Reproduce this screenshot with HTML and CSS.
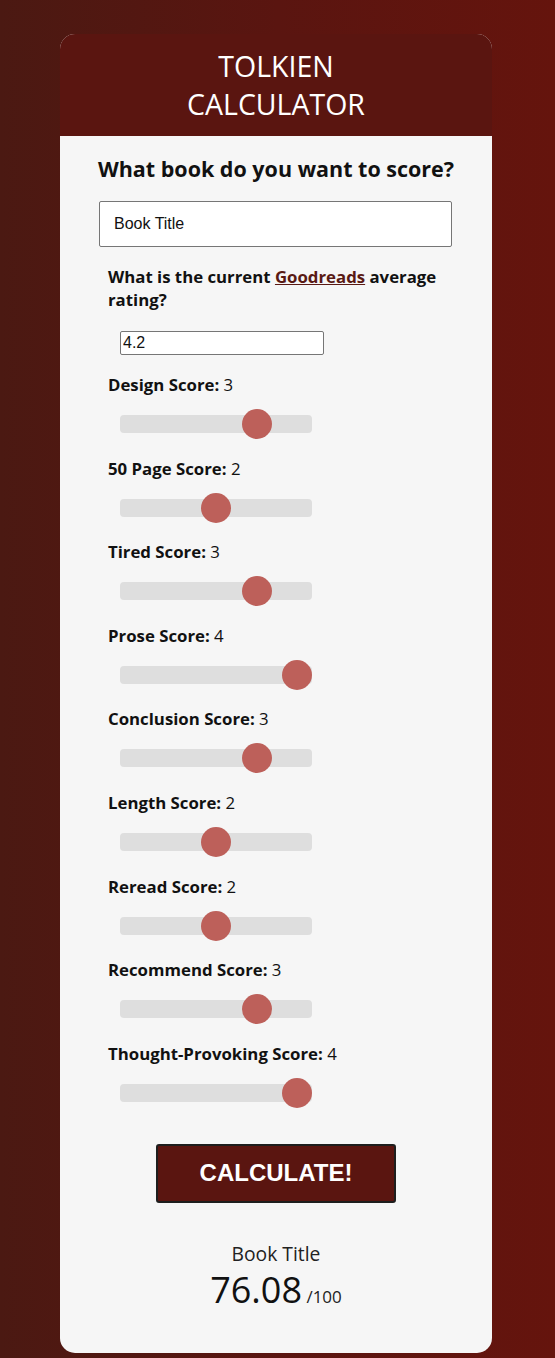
FILE: index.html
```html
<!DOCTYPE html>
<html lang="en">
<head>
<meta charset="utf-8">
<title>Tolkien Calculator</title>
<link rel="stylesheet" href="styles.css">
</head>
<body>
<main class="card">
  <header class="card-header">
    <h1 class="title">TOLKIEN<br>CALCULATOR</h1>
  </header>
  <section class="card-body">
    <h2 class="question">What book do you want to score?</h2>
    <input class="title-input" type="text" value="Book Title">
    <p class="rating-label">What is the current <a href="#" class="link">Goodreads</a> average rating?</p>
    <input class="rating-input" type="text" value="4.2">

    <div class="score"><p class="score-label"><b>Design Score:</b> 3</p><input class="slider" type="range" min="0" max="4" value="3"></div>
    <div class="score"><p class="score-label"><b>50 Page Score:</b> 2</p><input class="slider" type="range" min="0" max="4" value="2"></div>
    <div class="score"><p class="score-label"><b>Tired Score:</b> 3</p><input class="slider" type="range" min="0" max="4" value="3"></div>
    <div class="score"><p class="score-label"><b>Prose Score:</b> 4</p><input class="slider" type="range" min="0" max="4" value="4"></div>
    <div class="score"><p class="score-label"><b>Conclusion Score:</b> 3</p><input class="slider" type="range" min="0" max="4" value="3"></div>
    <div class="score"><p class="score-label"><b>Length Score:</b> 2</p><input class="slider" type="range" min="0" max="4" value="2"></div>
    <div class="score"><p class="score-label"><b>Reread Score:</b> 2</p><input class="slider" type="range" min="0" max="4" value="2"></div>
    <div class="score"><p class="score-label"><b>Recommend Score:</b> 3</p><input class="slider" type="range" min="0" max="4" value="3"></div>
    <div class="score"><p class="score-label"><b>Thought-Provoking Score:</b> 4</p><input class="slider" type="range" min="0" max="4" value="4"></div>

    <div class="actions"><button class="calc-btn" type="button">CALCULATE!</button></div>

    <div class="result">
      <p class="result-title">Book Title</p>
      <p class="result-score">76.08<span class="result-max"> /100</span></p>
    </div>
  </section>
</main>
</body>
</html>
```
FILE: styles.css
```css
* { box-sizing: border-box; }
html, body { margin: 0; padding: 0; }
body {
  background: linear-gradient(to right, #4b1912 0%, #5a1510 50%, #65140d 100%);
  font-family: "Open Sans", "Liberation Sans", sans-serif;
  color: #111;
  padding: 34px 0 6px;
  min-height: 1358px;
}
.card {
  width: 432px;
  margin: 0 0 0 60px;
  background: #f6f6f6;
  border-radius: 15px;
  overflow: hidden;
}
.card-header {
  background: #5a1510;
  height: 102px;
  display: flex;
  align-items: center;
  justify-content: center;
}
.title {
  margin: 0;
  color: #fff;
  font-weight: 400;
  font-size: 28.5px;
  line-height: 38px;
  text-align: center;
}
.card-body {
  display: flex;
  flex-direction: column;
  padding: 19px 0 41px;
}
.question {
  margin: 0;
  font-size: 21.5px;
  line-height: 28px;
  font-weight: 700;
  text-align: center;
}
.title-input {
  margin: 18px 0 0 39px;
  width: 353px;
  height: 46px;
  border: 1px solid #767676;
  border-radius: 2px;
  background: #fff;
  padding: 0 14px;
  font-family: "Liberation Sans", Arial, sans-serif;
  font-size: 16px;
  color: #111;
}
.rating-label {
  margin: 18px 48px 0 48px;
  font-size: 16.8px;
  line-height: 23px;
  font-weight: 700;
}
.link {
  color: #5a1a14;
  text-decoration: underline;
}
.rating-input {
  margin: 20px 0 0 60px;
  width: 204px;
  height: 24px;
  border: 1px solid #767676;
  border-radius: 2px;
  background: #fff;
  padding: 0 2px;
  font-family: "Liberation Sans", Arial, sans-serif;
  font-size: 16px;
  color: #111;
}
.score {
  display: flex;
  flex-direction: column;
  align-items: flex-start;
  padding-left: 48px;
  margin-top: 18px;
}
.score + .score { margin-top: 17.6px; }
.score-label {
  margin: 0;
  font-size: 16.8px;
  line-height: 23px;
  font-weight: 400;
}
.score-label b { font-weight: 700; }
.slider {
  -webkit-appearance: none;
  appearance: none;
  margin: 13px 0 0 12px;
  width: 192px;
  height: 30px;
  background: transparent;
  outline: none;
}
.slider::-webkit-slider-runnable-track {
  height: 18px;
  background: #dedede;
  border-radius: 4px;
}
.slider::-webkit-slider-thumb {
  -webkit-appearance: none;
  appearance: none;
  width: 30px;
  height: 30px;
  border-radius: 50%;
  background: #bd605a;
  margin-top: -6px;
  border: none;
}
.actions {
  display: flex;
  justify-content: center;
  margin-top: 36px;
}
.calc-btn {
  width: 240px;
  height: 59px;
  background: #5a1510;
  color: #fff;
  border: 2px solid #1e1e1e;
  border-radius: 3px;
  font-family: "Liberation Sans", Arial, sans-serif;
  font-weight: 700;
  font-size: 24px;
  padding: 0;
}
.result {
  margin-top: 38px;
  text-align: center;
}
.result-title {
  margin: 0;
  font-size: 19.3px;
  line-height: 25px;
  color: #222;
}
.result-score {
  margin: 2px 0 0;
  font-size: 36px;
  line-height: 44px;
  color: #111;
}
.result-max {
  font-size: 17px;
  line-height: 1;
  color: #222;
}
```
